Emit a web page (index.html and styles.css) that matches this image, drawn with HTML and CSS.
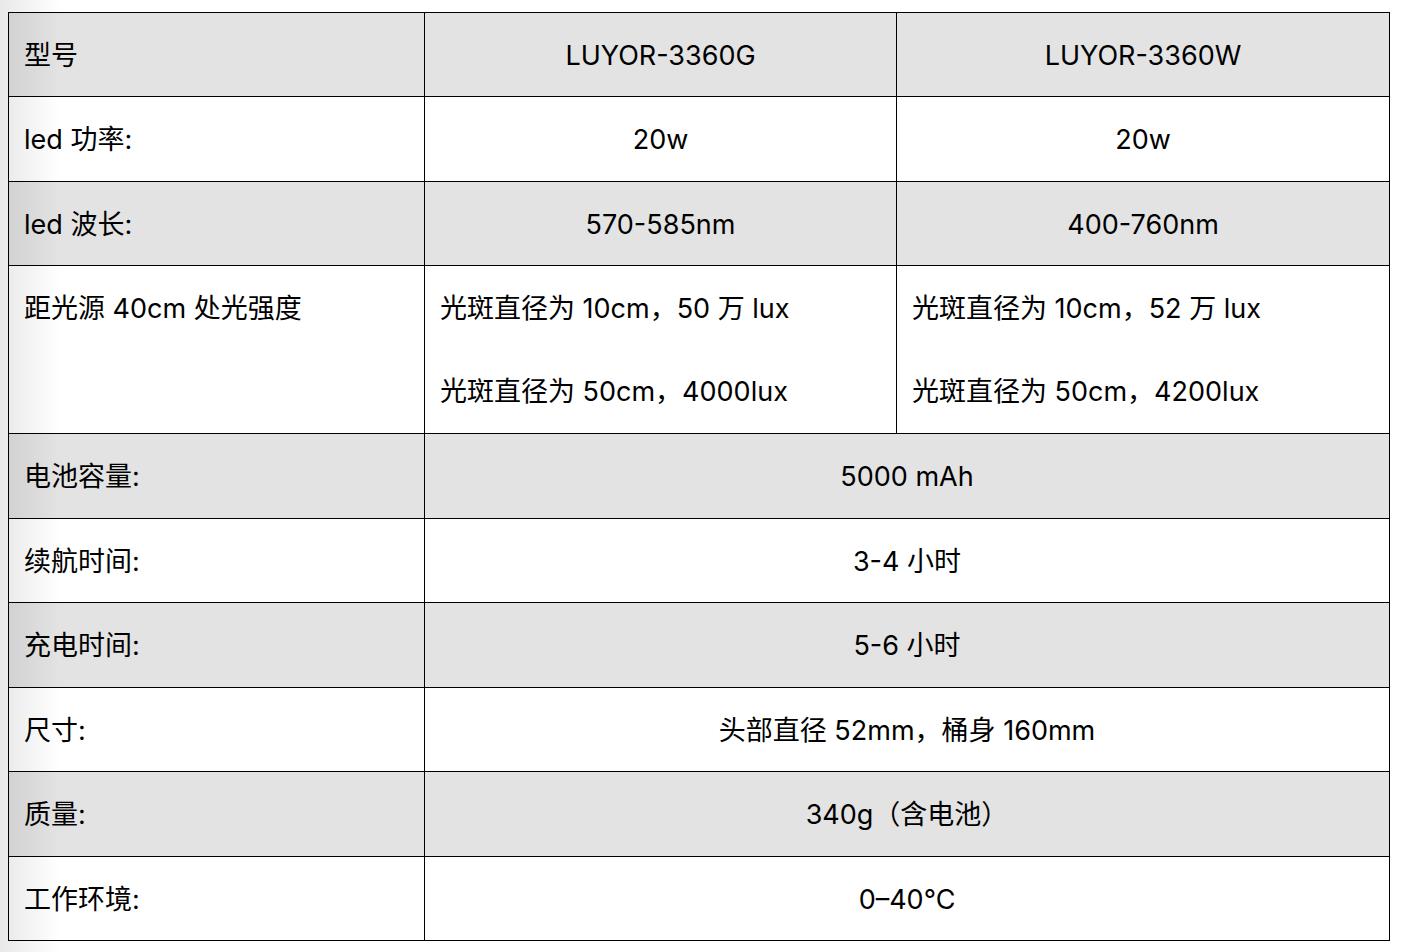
FILE: index.html
```html
<!DOCTYPE html>
<html lang="zh">
<head>
<meta charset="utf-8">
<link rel="stylesheet" href="styles.css">
</head>
<body>
<div class="edge-shade"></div>
<table class="spec">
  <colgroup>
    <col class="c1"><col class="c2"><col class="c3">
  </colgroup>
  <tr class="gray">
    <td>型号</td><td class="center">LUYOR-3360G</td><td class="center">LUYOR-3360W</td>
  </tr>
  <tr>
    <td>led 功率:</td><td class="center">20w</td><td class="center">20w</td>
  </tr>
  <tr class="gray">
    <td>led 波长:</td><td class="center">570-585nm</td><td class="center">400-760nm</td>
  </tr>
  <tr>
    <td>距光源 40cm 处光强度</td>
    <td><p>光斑直径为 10cm，50 万 lux</p><p>光斑直径为 50cm，4000lux</p></td>
    <td><p>光斑直径为 10cm，52 万 lux</p><p>光斑直径为 50cm，4200lux</p></td>
  </tr>
  <tr class="gray">
    <td>电池容量:</td><td class="center" colspan="2">5000 mAh</td>
  </tr>
  <tr>
    <td>续航时间:</td><td class="center" colspan="2">3-4 小时</td>
  </tr>
  <tr class="gray">
    <td>充电时间:</td><td class="center" colspan="2">5-6 小时</td>
  </tr>
  <tr>
    <td>尺寸:</td><td class="center" colspan="2">头部直径 52mm，桶身 160mm</td>
  </tr>
  <tr class="gray">
    <td>质量:</td><td class="center" colspan="2">340g（含电池）</td>
  </tr>
  <tr>
    <td>工作环境:</td><td class="center" colspan="2">0–40℃</td>
  </tr>
</table>
</body>
</html>
```

FILE: styles.css
```css
html, body {
  margin: 0;
  padding: 0;
  background: #ffffff;
}
body {
  padding: 12px 0 0 8px;
  font-family: "Inter", "Noto Sans CJK SC", sans-serif;
  color: #000;
}
.edge-shade {
  position: absolute;
  left: 0;
  top: 0;
  width: 60px;
  height: 952px;
  background: linear-gradient(to right, rgba(0,0,0,0.09), rgba(0,0,0,0));
  pointer-events: none;
  z-index: 2;
}
.spec {
  border-collapse: collapse;
  table-layout: fixed;
  width: 1381px;
  font-size: 27px;
}
.c1 { width: 416px; }
.c2 { width: 472px; }
.c3 { width: 493px; }
.spec td {
  border: 1px solid #000;
  padding: 2px 15px 0;
  height: 81.45px;
  line-height: 81.45px;
  vertical-align: top;
  white-space: nowrap;
}
.spec td.center { text-align: center; }
.spec tr.gray td { background: #e3e3e3; }
.spec p { margin: 0; line-height: 82.5px; }
```
